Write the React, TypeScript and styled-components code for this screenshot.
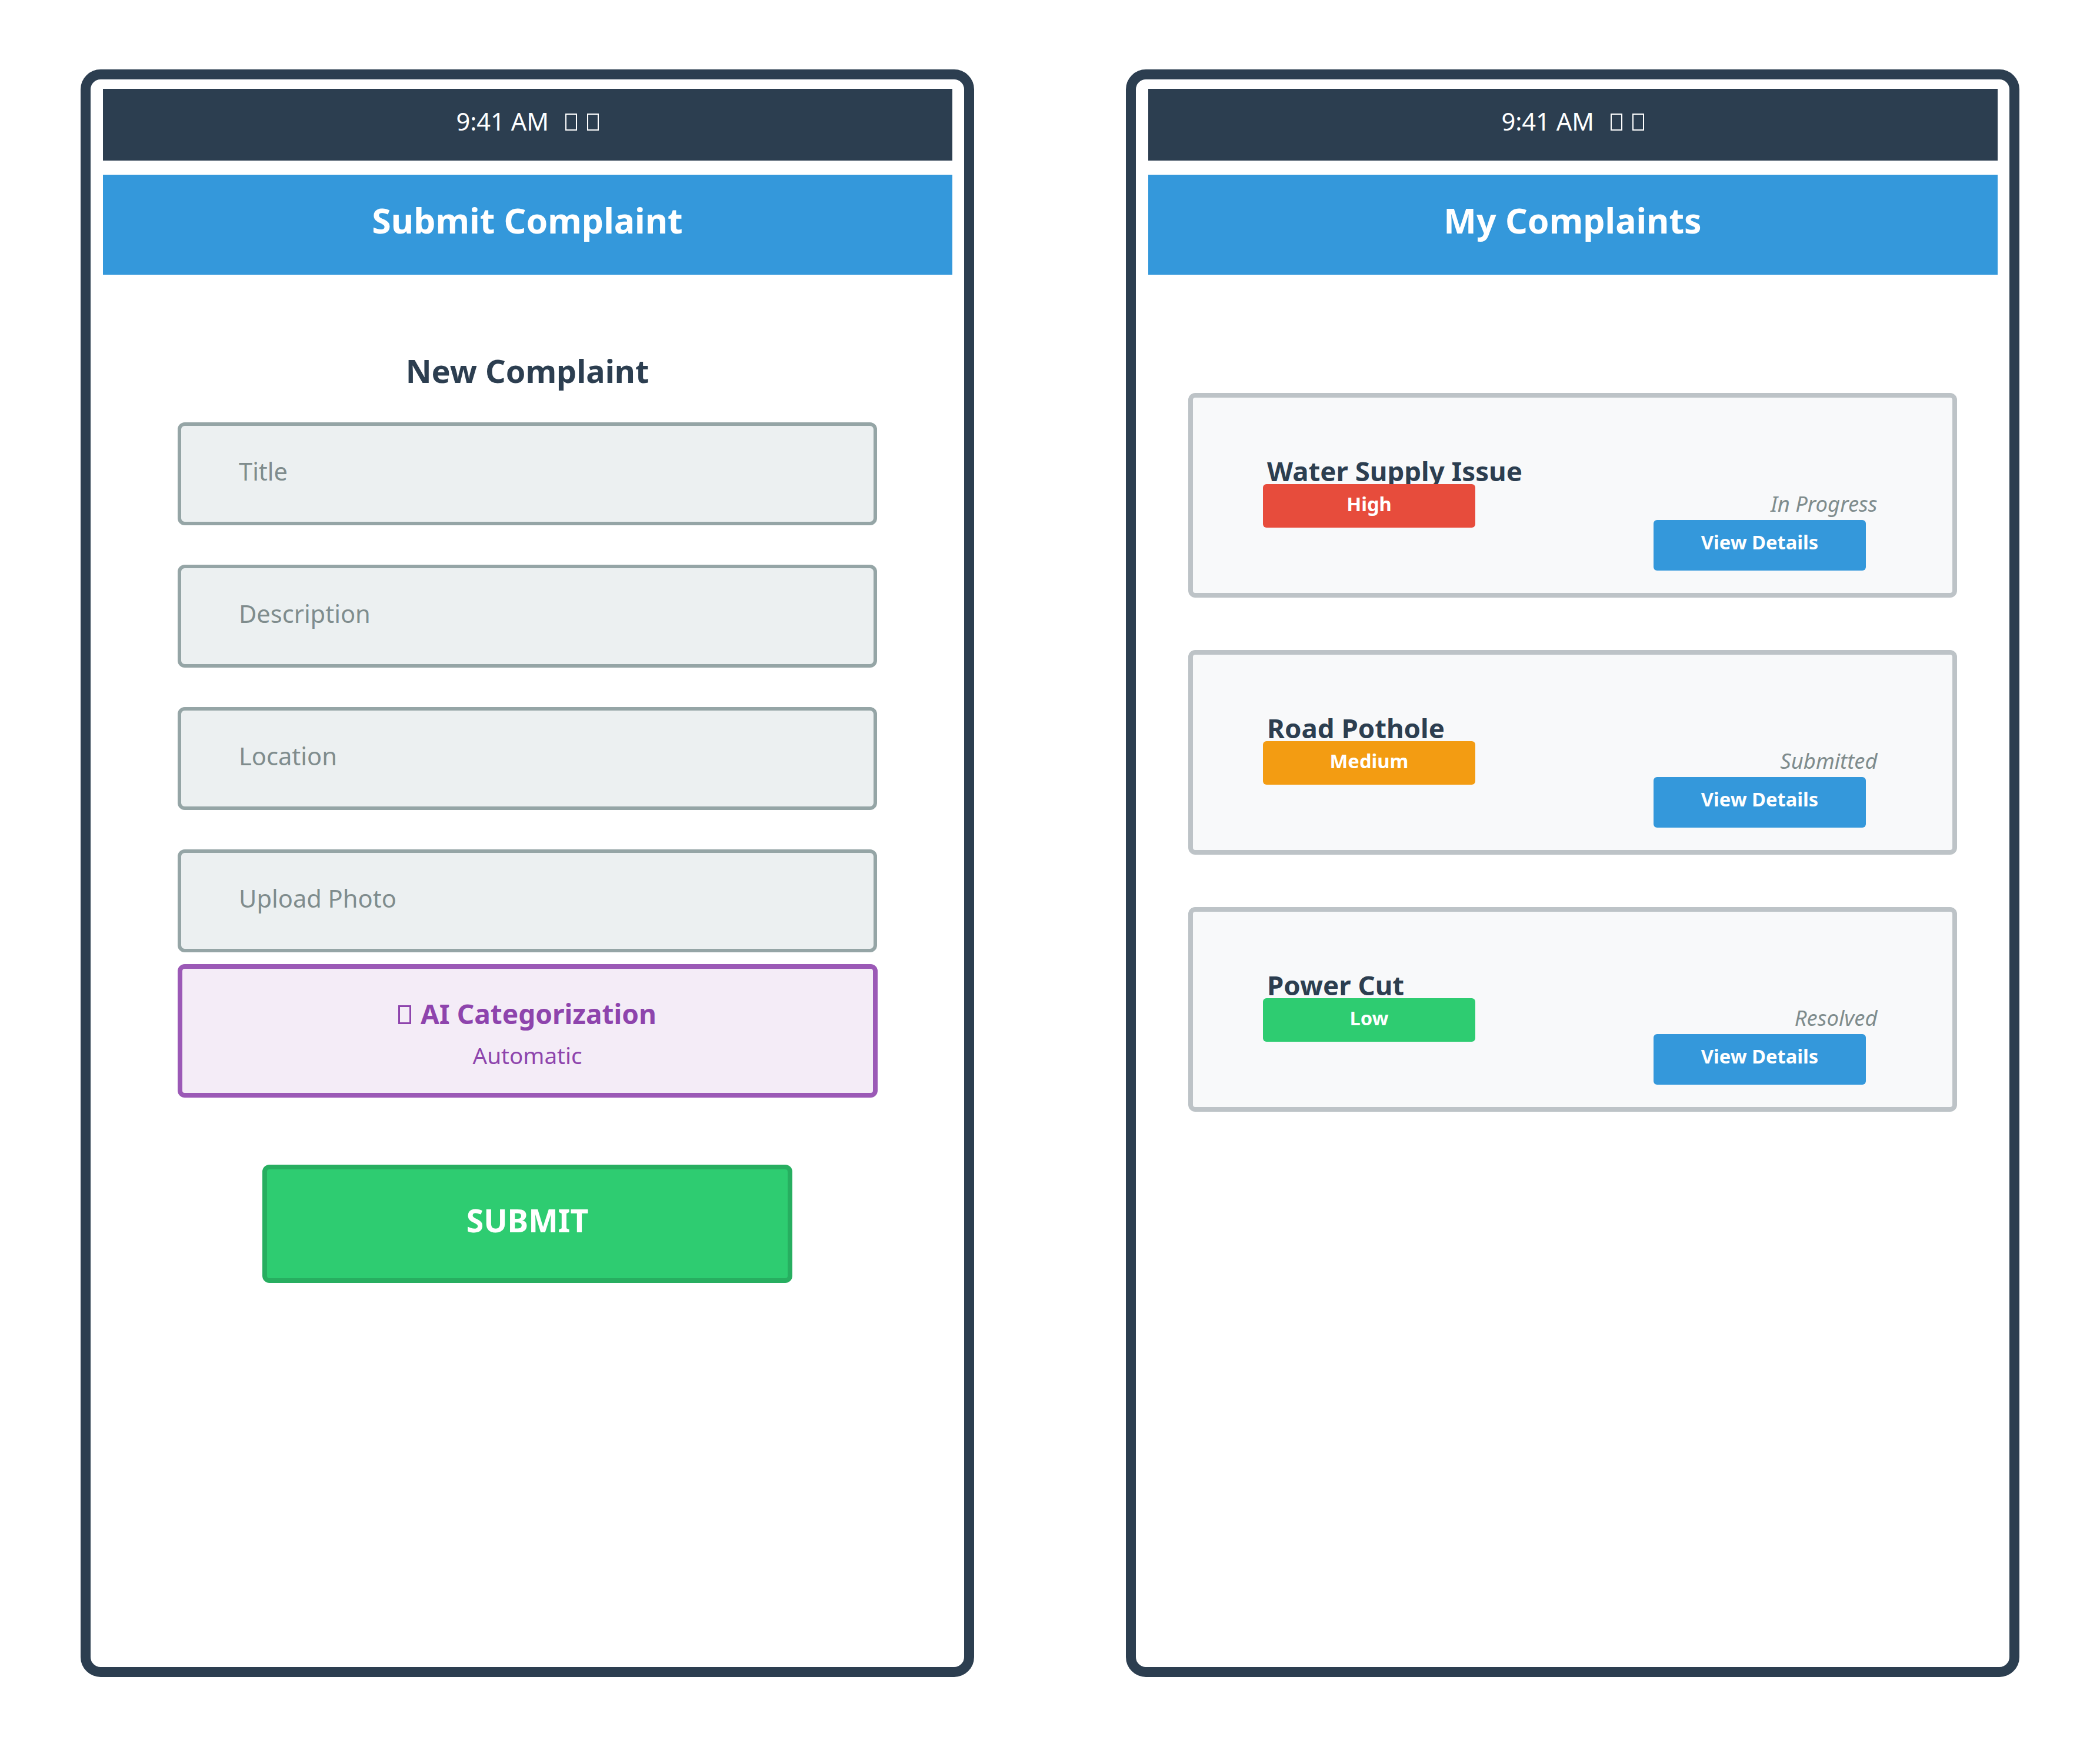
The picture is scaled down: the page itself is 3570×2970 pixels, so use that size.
import React from "react";
import styled, { createGlobalStyle } from "styled-components";

const Global = createGlobalStyle`
  html, body { margin: 0; padding: 0; background: #ffffff; }
  body { font-family: "Noto Sans", "Open Sans", sans-serif; }
  * { box-sizing: border-box; }
`;

const Page = styled.div`
  width: 3570px;
  height: 2970px;
  display: flex;
  gap: 258px;
  padding: 118px 137px 0;
  background: #ffffff;
`;

const Phone = styled.div`
  width: 1519px;
  height: 2733px;
  border: 17px solid #2c3e50;
  border-radius: 34px;
  background: #ffffff;
  padding: 16px 20.5px 0;
  display: flex;
  flex-direction: column;
`;

const StatusBar = styled.div`
  height: 122px;
  background: #2c3e50;
  color: #ffffff;
  font-size: 41.6px;
  line-height: 1;
  text-align: center;
  padding-top: 35.4px;
  white-space: pre;
`;

/* missing-glyph box, as the reference renders its emoji */
const Tofu = styled.span<{ $left?: number; $right?: number; $stroke?: number }>`
  display: inline-block;
  width: 0.48em;
  height: 0.7em;
  border: ${(p) => p.$stroke ?? 2}px solid currentColor;
  margin-left: ${(p) => p.$left ?? 0}px;
  margin-right: ${(p) => p.$right ?? 0}px;
  vertical-align: baseline;
`;

const Header = styled.div`
  margin-top: 24px;
  height: 170px;
  background: #3498db;
  color: #ffffff;
  font-size: 59px;
  font-weight: 700;
  line-height: 1;
  text-align: center;
  padding-top: 47.6px;
`;

const FormBody = styled.div`
  display: flex;
  flex-direction: column;
  align-items: center;
  padding-top: 135.5px;
`;

const Heading = styled.div`
  font-size: 54px;
  font-weight: 700;
  line-height: 1;
  color: #2c3e50;
  margin-bottom: 61.5px;
`;

const Fields = styled.div`
  display: flex;
  flex-direction: column;
  gap: 67px;
`;

const Field = styled.div`
  width: 1189px;
  height: 175px;
  border: 6px solid #95a5a6;
  border-radius: 12px;
  background: #ecf0f1;
  padding: 57px 0 0 98px;
  font-size: 41.6px;
  line-height: 1;
  color: #7f8c8d;
`;

const AIBox = styled.div`
  margin-top: 20px;
  width: 1190px;
  height: 227px;
  border: 8px solid #9b59b6;
  border-radius: 12px;
  background: #f4ecf7;
  color: #8e44ad;
  text-align: center;
  padding-top: 53px;
`;

const AITitle = styled.div`
  font-size: 46px;
  font-weight: 700;
  line-height: 1;
  white-space: pre;
`;

const AISub = styled.div`
  margin-top: 29.4px;
  font-size: 38.6px;
  line-height: 1;
`;

const SubmitButton = styled.div`
  margin-top: 114px;
  width: 901px;
  height: 201px;
  border: 8px solid #27ae60;
  border-radius: 12px;
  background: #2ecc71;
  color: #ffffff;
  font-size: 53.5px;
  font-weight: 700;
  line-height: 1;
  text-align: center;
  padding-top: 59.5px;
`;

const CardList = styled.div`
  display: flex;
  flex-direction: column;
  align-items: center;
  gap: 89px;
  padding-top: 201px;
`;

const Card = styled.div`
  width: 1307px;
  height: 348px;
  border: 8px solid #bdc3c7;
  border-radius: 12px;
  background: #f8f9fa;
  display: flex;
  justify-content: space-between;
  align-items: flex-start;
`;

const CardLeft = styled.div`
  display: flex;
  flex-direction: column;
  align-items: flex-start;
  padding: 101.8px 0 0 119px;
`;

const CardTitle = styled.div`
  margin-left: 7px;
  font-size: 45.6px;
  font-weight: 700;
  line-height: 1;
  color: #2c3e50;
`;

const Badge = styled.div<{ $color: string }>`
  width: 361px;
  height: 74px;
  border-radius: 6px;
  background: ${(p) => p.$color};
  color: #ffffff;
  font-size: 32.7px;
  font-weight: 700;
  line-height: 1;
  text-align: center;
  padding-top: 18px;
`;

const CardRight = styled.div`
  display: flex;
  flex-direction: column;
  align-items: flex-end;
  padding: 162px 147px 0 0;
`;

const StatusText = styled.div`
  margin-right: -19.5px;
  font-size: 36.4px;
  font-style: italic;
  line-height: 1;
  color: #7f8c8d;
`;

const DetailsButton = styled.div`
  margin-top: 9.6px;
  width: 361px;
  height: 86px;
  border-radius: 6px;
  background: #3498db;
  color: #ffffff;
  font-size: 32.7px;
  font-weight: 700;
  line-height: 1;
  text-align: center;
  padding-top: 22px;
`;

const complaints = [
  { title: "Water Supply Issue", priority: "High", color: "#e74c3c", status: "In Progress" },
  { title: "Road Pothole", priority: "Medium", color: "#f39c12", status: "Submitted" },
  { title: "Power Cut", priority: "Low", color: "#2ecc71", status: "Resolved" },
];

const fields = ["Title", "Description", "Location", "Upload Photo"];

function Status() {
  return (
    <StatusBar>
      9:41 AM <Tofu $left={17} aria-label="signal" /> <Tofu $left={6} aria-label="battery" />
    </StatusBar>
  );
}

export default function App() {
  return (
    <>
      <Global />
      <Page>
        <Phone>
          <Status />
          <Header>Submit Complaint</Header>
          <FormBody>
            <Heading>New Complaint</Heading>
            <Fields>
              {fields.map((f) => (
                <Field key={f}>{f}</Field>
              ))}
            </Fields>
            <AIBox>
              <AITitle>
                <Tofu $stroke={3} $right={4} aria-label="robot" /> AI Categorization
              </AITitle>
              <AISub>Automatic</AISub>
            </AIBox>
            <SubmitButton>SUBMIT</SubmitButton>
          </FormBody>
        </Phone>
        <Phone>
          <Status />
          <Header>My Complaints</Header>
          <CardList>
            {complaints.map((c) => (
              <Card key={c.title}>
                <CardLeft>
                  <CardTitle>{c.title}</CardTitle>
                  <Badge $color={c.color}>{c.priority}</Badge>
                </CardLeft>
                <CardRight>
                  <StatusText>{c.status}</StatusText>
                  <DetailsButton>View Details</DetailsButton>
                </CardRight>
              </Card>
            ))}
          </CardList>
        </Phone>
      </Page>
    </>
  );
}
